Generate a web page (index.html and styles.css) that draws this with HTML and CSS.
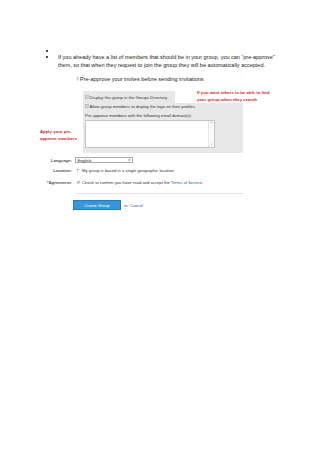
FILE: index.html
```html
<!DOCTYPE html>
<html>
<head>
<meta charset="utf-8">
<link rel="stylesheet" href="styles.css">
</head>
<body>
<div class="page">
  <ul class="bullets">
    <li class="empty"><span class="dot"></span></li>
    <li><span class="dot"></span><span class="txt">If you already have a list of members that should be in your group, you can “pre-approve”<br>them, so that when they request to join the group they will be automatically accepted.</span></li>
  </ul>
  <p class="caption">! Pre-approve your invites before sending invitations</p>
  <div class="shot">
    <div class="note note-right">If you want others to be able to find<br>your group when they search</div>
    <div class="note note-left">Apply your pre-<br>approve members</div>
    <div class="panel">
      <div class="panel-top">
        <div class="chk"><svg class="box" viewBox="0 0 8 8"><rect x="0.5" y="0.5" width="7" height="7" fill="#fff" stroke="#8a8a8a"/><path d="M1.8 4.2 L3.4 5.8 L6.4 1.8" fill="none" stroke="#444" stroke-width="1.1"/></svg>Display this group in the Groups Directory.</div>
      </div>
      <div class="panel-main">
        <div class="chk"><svg class="box" viewBox="0 0 8 8"><rect x="0.5" y="0.5" width="7" height="7" fill="#fff" stroke="#8a8a8a"/><path d="M1.8 4.2 L3.4 5.8 L6.4 1.8" fill="none" stroke="#444" stroke-width="1.1"/></svg>Allow group members to display the logo on their profiles.</div>
        <div class="plabel">Pre-approve members with the following email domain(s):</div>
        <div class="textarea">
          <div class="sb"><span class="arr">▲</span><span class="arr">▼</span></div>
        </div>
      </div>
    </div>
    <div class="form">
      <div class="row r1"><span class="lbl">Language:</span><div class="select"><span>English</span><span class="caret">▼</span></div></div>
      <div class="row r2"><span class="lbl">Location:</span><div class="field"><svg class="box" viewBox="0 0 8 8"><rect x="0.5" y="0.5" width="7" height="7" fill="#fff" stroke="#8a8a8a"/></svg>My group is based in a single geographic location.</div></div>
      <div class="row r3"><span class="lbl">*Agreement:</span><div class="field"><svg class="box" viewBox="0 0 8 8"><rect x="0.5" y="0.5" width="7" height="7" fill="#fff" stroke="#8a8a8a"/><path d="M1.8 4.2 L3.4 5.8 L6.4 1.8" fill="none" stroke="#444" stroke-width="1.1"/></svg>Check to confirm you have read and accept the <a class="link">Terms of Service</a>.</div></div>
      <div class="rule"></div>
      <div class="actions"><span class="btn">Create Group</span><span class="or">or <a class="link">Cancel</a></span></div>
    </div>
  </div>
</div>
</body>
</html>
```
FILE: styles.css
```css
html, body {
  margin: 0;
  padding: 0;
  background: #fff;
}
.page {
  width: 320px;
  height: 453px;
  padding-top: 47px;
  box-sizing: border-box;
  font-family: "Liberation Sans", Arial, sans-serif;
  color: #222;
}
.bullets {
  list-style: none;
  margin: 0;
  padding: 0 0 0 46px;
  font-size: 5.5px;
}
.bullets li {
  display: flex;
  line-height: 8px;
}
.bullets li.empty {
  line-height: 6px;
  height: 6px;
}
.dot {
  width: 12px;
  flex: none;
  display: flex;
  align-items: center;
  height: 8px;
}
.bullets li.empty .dot {
  height: 8px;
}
.dot::before {
  content: "";
  width: 2.2px;
  height: 2.2px;
  border-radius: 50%;
  background: #111;
}
.caption {
  margin: 6px 0 0 77px;
  font-size: 5.5px;
  line-height: 8px;
}
.shot {
  position: relative;
  margin-top: 8px;
  font-size: 4.2px;
  color: #333;
}
.note {
  position: absolute;
  color: #cc2b2b;
  font-size: 4.3px;
  line-height: 6.5px;
  font-weight: bold;
  white-space: nowrap;
}
.note-right {
  left: 197px;
  top: -1px;
}
.note-left {
  left: 40px;
  top: 38px;
}
.panel {
  margin-left: 83px;
}
.panel-top {
  width: 92px;
  height: 12px;
  background: #e8e8e8;
  box-sizing: border-box;
  padding: 3px 0 0 2px;
}
.panel-main {
  width: 160px;
  height: 50px;
  background: #e8e8e8;
  box-sizing: border-box;
  padding: 0 2px;
}
.chk {
  display: flex;
  align-items: center;
  height: 6px;
  white-space: nowrap;
}
.box {
  width: 3.6px;
  height: 3.6px;
  flex: none;
  margin-right: 1px;
}
.plabel {
  margin-top: 4px;
  height: 6px;
  line-height: 6px;
  white-space: nowrap;
}
.textarea {
  margin-top: 1px;
  width: 130px;
  height: 28px;
  box-sizing: border-box;
  background: #fff;
  border: 0.6px solid #c4c4c4;
  display: flex;
  justify-content: flex-end;
}
.sb {
  width: 5px;
  display: flex;
  flex-direction: column;
  justify-content: space-between;
  align-items: center;
  background: #fafafa;
  border-left: 0.5px solid #e6e6e6;
}
.arr {
  font-size: 2.4px;
  line-height: 4px;
  color: #999;
}
.form {
  display: flex;
  flex-direction: column;
}
.row {
  display: flex;
  align-items: center;
  height: 7px;
}
.r1 { margin-top: 3.5px; }
.r2 { margin-top: 3.5px; }
.r3 { margin-top: 5px; }
.lbl {
  width: 72px;
  text-align: right;
  font-weight: bold;
  color: #555;
  margin-right: 3px;
  flex: none;
}
.select {
  width: 58px;
  height: 6px;
  box-sizing: border-box;
  border: 0.6px solid #aaa;
  background: #fff;
  display: flex;
  align-items: center;
  justify-content: space-between;
  padding: 0 1.5px;
  color: #222;
}
.caret {
  font-size: 2.6px;
  color: #222;
}
.field {
  display: flex;
  align-items: center;
  white-space: nowrap;
  padding-left: 1.5px;
}
.field .box {
  margin-right: 2px;
}
.link {
  color: #2a5ca8;
  margin-left: 1px;
}
.rule {
  margin: 7px 0 0 75px;
  width: 168px;
  height: 1px;
  background: #e3e3e3;
}
.actions {
  display: flex;
  align-items: center;
  margin: 6px 0 0 73px;
}
.btn {
  width: 48px;
  height: 10px;
  box-sizing: border-box;
  background: #3996d5;
  border: 0.6px solid #2a7bbd;
  color: #fff;
  display: flex;
  align-items: center;
  justify-content: center;
}
.or {
  margin-left: 3px;
  color: #555;
}
```
